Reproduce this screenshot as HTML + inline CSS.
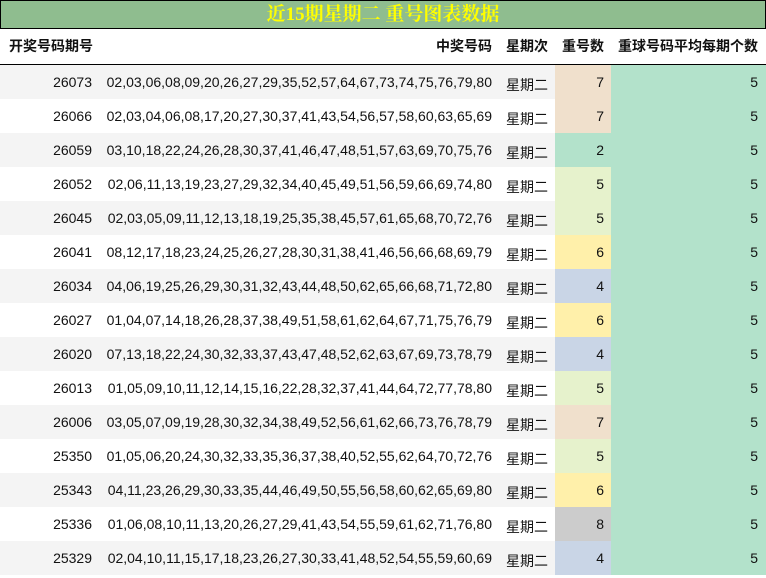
<!DOCTYPE html>
<html><head><meta charset="utf-8"><style>
body{margin:0;width:766px;height:576px;overflow:hidden;background:#fff;font-family:"Liberation Sans","Noto Sans CJK SC",sans-serif;font-size:14px;color:#111}
.title{position:absolute;left:0;top:0;width:764px;height:27px;background:#8fbd8f;border:1px solid #000;text-align:center;color:#ffff00;font:bold 19px "Liberation Serif","Noto Serif CJK SC",serif;line-height:28px}
.hdr{position:absolute;top:29px;left:0;width:766px;height:35px;border-bottom:1px solid #000;font-weight:bold}
.r{position:absolute;left:0;width:766px;height:34px}
.c{position:absolute;top:0;height:34px;line-height:34px;white-space:nowrap}
.c1{left:0;width:92px;text-align:right}
.c2{left:100px;width:392px;text-align:right}
.c3{left:499px;width:56px;text-align:center}
.c4{left:555px;width:49px;padding-right:7px;text-align:right}
.c5{left:611px;width:147px;padding-right:8px;text-align:right;background:#b3e2cb}
.r .c3{top:3px}
.hdr .c1{text-align:left;left:9px}
.hdr .c4,.hdr .c5{background:none}
.hdr .c5{text-align:right}
</style></head><body>
<div class="title">近15期星期二 重号图表数据</div>
<div class="hdr"><div class="c c1">开奖号码期号</div><div class="c c2">中奖号码</div><div class="c c3">星期次</div><div class="c c4">重号数</div><div class="c c5">重球号码平均每期个数</div></div>
<div id="rows"></div>
<script>
var d=[["26073","02,03,06,08,09,20,26,27,29,35,52,57,64,67,73,74,75,76,79,80",7],
["26066","02,03,04,06,08,17,20,27,30,37,41,43,54,56,57,58,60,63,65,69",7],
["26059","03,10,18,22,24,26,28,30,37,41,46,47,48,51,57,63,69,70,75,76",2],
["26052","02,06,11,13,19,23,27,29,32,34,40,45,49,51,56,59,66,69,74,80",5],
["26045","02,03,05,09,11,12,13,18,19,25,35,38,45,57,61,65,68,70,72,76",5],
["26041","08,12,17,18,23,24,25,26,27,28,30,31,38,41,46,56,66,68,69,79",6],
["26034","04,06,19,25,26,29,30,31,32,43,44,48,50,62,65,66,68,71,72,80",4],
["26027","01,04,07,14,18,26,28,37,38,49,51,58,61,62,64,67,71,75,76,79",6],
["26020","07,13,18,22,24,30,32,33,37,43,47,48,52,62,63,67,69,73,78,79",4],
["26013","01,05,09,10,11,12,14,15,16,22,28,32,37,41,44,64,72,77,78,80",5],
["26006","03,05,07,09,19,28,30,32,34,38,49,52,56,61,62,66,73,76,78,79",7],
["25350","01,05,06,20,24,30,32,33,35,36,37,38,40,52,55,62,64,70,72,76",5],
["25343","04,11,23,26,29,30,33,35,44,46,49,50,55,56,58,60,62,65,69,80",6],
["25336","01,06,08,10,11,13,20,26,27,29,41,43,54,55,59,61,62,71,76,80",8],
["25329","02,04,10,11,15,17,18,23,26,27,30,33,41,48,52,54,55,59,60,69",4]];
var col={7:"#f0e0cc",2:"#b3e2cb",5:"#e6f2cc",6:"#fff0aa",4:"#c9d5e6",8:"#cccccc"};
var h="";
d.forEach(function(x,i){h+='<div class="r" style="top:'+(65+i*34)+'px;background:'+(i%2?'#fff':'#f4f4f4')+'"><div class="c c1">'+x[0]+'</div><div class="c c2">'+x[1]+'</div><div class="c c3">星期二</div><div class="c c4" style="background:'+col[x[2]]+'">'+x[2]+'</div><div class="c c5">5</div></div>';});
document.getElementById("rows").innerHTML=h;
</script>
</body></html>
